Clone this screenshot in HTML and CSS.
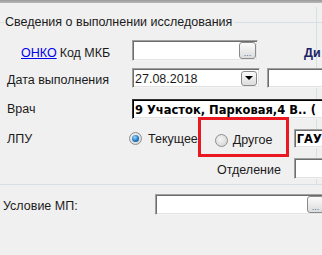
FILE: index.html
```html
<!DOCTYPE html>
<html lang="ru">
<head>
    <meta charset="UTF-8">
    <meta name="viewport" content="width=device-width, initial-scale=1.0">
    <title>Сведения о выполнении исследования</title>
    <link rel="stylesheet" href="styles.css">
</head>
<body>

<div class="topbar"></div>

<fieldset class="group">
    <legend>Сведения о выполнении исследования</legend>

    <div class="row row-mkb">
        <div class="cap cap-mkb">
            <a href="#" class="link">ОНКО</a>
            <span class="label">Код МКБ</span>
        </div>
        <div class="field field-mkb">
            <span class="btn btn-dots">...</span>
        </div>
        <span class="label-di">Ди</span>
    </div>

    <div class="row row-date">
        <div class="cap"><span class="label">Дата выполнения</span></div>
        <div class="field field-date">
            <span class="value">27.08.2018</span>
            <span class="btn btn-drop"><span class="arrow"></span></span>
        </div>
        <div class="field field-time"></div>
    </div>

    <div class="row row-doc">
        <div class="cap"><span class="label">Врач</span></div>
        <div class="field field-doc focused">
            <span class="value bold">9 Участок, Парковая,4 В.. (</span>
        </div>
    </div>

    <div class="row row-lpu">
        <div class="cap cap-lpu"><span class="label">ЛПУ</span></div>
        <label class="opt">
            <span class="radio checked"></span>
            <span class="label">Текущее</span>
        </label>
        <label class="opt opt-marked">
            <span class="radio"></span>
            <span class="label">Другое</span>
        </label>
        <div class="field field-lpu">
            <span class="value bold">ГАУ</span>
        </div>
    </div>

    <div class="row row-dep">
        <span class="label label-dep">Отделение</span>
        <div class="field field-dep"></div>
    </div>
</fieldset>

<div class="row row-cond">
    <div class="cap cap-cond"><span class="label">Условие МП:</span></div>
    <div class="field field-cond">
        <span class="btn btn-dots">...</span>
    </div>
</div>

</body>
</html>
```

FILE: styles.css
```css
html, body {
    margin: 0;
    padding: 0;
    overflow: hidden;
}
body {
    width: 322px;
    height: 255px;
    font-family: "Liberation Sans", Arial, sans-serif;
    font-size: 12.5px;
    color: #1b1b1b;
    background: linear-gradient(#d5dfe5, #d5dfe5) 316px 7px / 1px 178px no-repeat, #f0f0f0;
}
.topbar {
    height: 3px;
    background: linear-gradient(#9a9a9a, #b8b8b8);
}
.group {
    margin: 12px 0 0 -2px;
    padding: 0 0 5px 0;
    width: 360px;
    border: 1px solid #d5dfe5;
    border-radius: 3px;
    min-width: 0;
}
.group legend {
    margin-left: 5px;
    padding: 0 2px 0 1px;
    line-height: 15px;
}
.row {
    display: flex;
    align-items: center;
    padding-left: 8px;
}
.cap {
    width: 125px;
    flex-shrink: 0;
    display: flex;
    align-items: center;
}
.label {
    white-space: nowrap;
}
.link {
    color: #0000ee;
    text-decoration: underline;
    margin-left: 14px;
    margin-right: 3px;
}
.row-mkb {
    margin-top: 10px;
    height: 21px;
}
.cap-mkb {
    padding-top: 5px;
}
.row-date {
    margin-top: 7px;
    height: 20px;
}
.row-date .cap {
    padding-top: 3px;
}
.row-doc {
    margin-top: 11px;
    height: 20px;
}
.row-lpu {
    margin-top: -2px;
    height: 40px;
}
.cap-lpu {
    width: 122px;
    padding-top: 3px;
}
.row-dep {
    margin-top: 1px;
    height: 21px;
}
.row-cond {
    margin-top: 9px;
    height: 21px;
    padding-left: 3px;
}
.cap-cond {
    width: 152px;
    padding-top: 2px;
}

/* sunken edit boxes */
.field {
    box-sizing: border-box;
    height: 100%;
    flex-shrink: 0;
    display: flex;
    align-items: center;
    background: #fff;
    border: 1px solid;
    border-color: #a0a0a0 #f4f4f4 #f4f4f4 #a0a0a0;
    box-shadow: inset 1px 1px 0 #6d6d6d, inset -1px -1px 0 #e3e3e3;
    padding-left: 2px;
}
.field.focused {
    border-color: #333 #f4f4f4 #f4f4f4 #333;
    box-shadow: inset 1px 1px 0 #000, inset -1px -1px 0 #e3e3e3;
}
.field-mkb {
    width: 126px;
    justify-content: flex-end;
    padding-right: 1px;
}
.field-date {
    width: 128px;
    justify-content: space-between;
    padding-right: 2px;
}
.field-time {
    width: 70px;
    margin-left: 7px;
}
.field-doc {
    width: 220px;
}
.field-lpu {
    width: 60px;
    height: 19px;
    margin-left: 5px;
    margin-top: 3px;
}
.field-dep {
    width: 60px;
    margin-left: 13px;
}
.field-cond {
    width: 170px;
    justify-content: flex-end;
    padding-right: 0;
}
.value {
    white-space: nowrap;
    padding-top: 1px;
}
.bold {
    font-family: "DejaVu Sans", Verdana, sans-serif;
    font-size: 11.5px;
    font-weight: bold;
    color: #000;
}
.label-di {
    margin-left: 46px;
    padding-top: 5px;
    font-weight: bold;
    color: #1a2366;
}
.label-dep {
    margin-left: 210px;
    padding-top: 3px;
}

/* small buttons inside edits */
.btn {
    box-sizing: border-box;
    border: 1px solid #8b8b8b;
    border-radius: 3px;
    background: linear-gradient(#fbfbfb, #dcdcdc);
    display: flex;
    justify-content: center;
}
.btn-dots {
    width: 17px;
    height: 17px;
    align-items: flex-end;
    font-size: 9px;
    line-height: 10px;
    color: #4d6f9c;
}
.btn-drop {
    width: 16px;
    height: 15px;
    align-items: center;
}
.arrow {
    width: 0;
    height: 0;
    border-left: 4px solid transparent;
    border-right: 4px solid transparent;
    border-top: 4px solid #000;
}

/* radio buttons */
.opt {
    display: flex;
    align-items: center;
    padding-top: 3px;
}
.opt .radio {
    margin-right: 6px;
}
.opt-marked {
    box-sizing: border-box;
    width: 91px;
    height: 40px;
    border: 3px solid #ea1921;
    padding-left: 14px;
    padding-top: 6px;
}
.opt-marked .radio {
    margin-right: 5px;
}
.radio {
    box-sizing: border-box;
    width: 13px;
    height: 13px;
    border-radius: 50%;
    border: 1px solid #8e8f8f;
    background: radial-gradient(circle at 40% 40%, #f4f4f4, #d0d0d0);
    display: flex;
    align-items: center;
    justify-content: center;
}
.radio.checked::after {
    content: "";
    width: 7px;
    height: 7px;
    border-radius: 50%;
    background: radial-gradient(circle at 40% 35%, #9ad7fb, #1a6fbf 60%, #0c4a8a);
}
```
